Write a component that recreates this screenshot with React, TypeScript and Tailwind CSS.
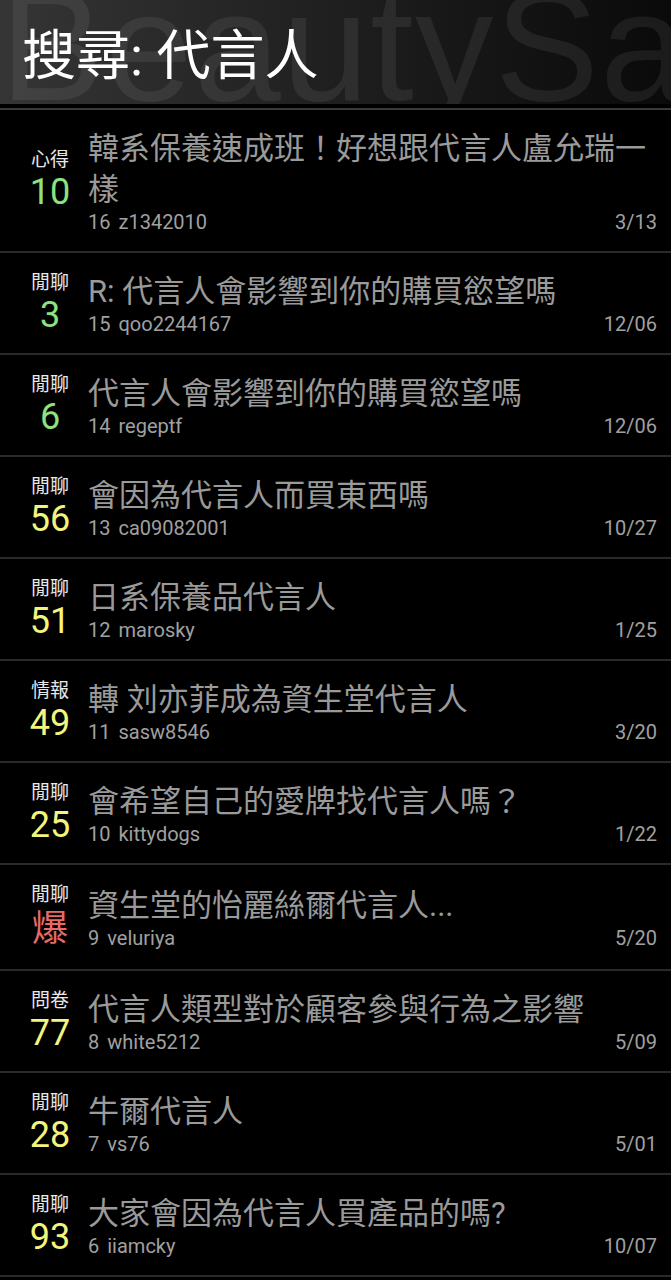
import React from "react";

type Row = {
  cat: string;
  num: string;
  tone: "green" | "yellow" | "red";
  title: string;
  idx: number;
  user: string;
  date: string;
};

const rows: Row[] = [
  { cat: "心得", num: "10", tone: "green", title: "韓系保養速成班！好想跟代言人盧允瑞一樣", idx: 16, user: "z1342010", date: "3/13" },
  { cat: "閒聊", num: "3", tone: "green", title: "R: 代言人會影響到你的購買慾望嗎", idx: 15, user: "qoo2244167", date: "12/06" },
  { cat: "閒聊", num: "6", tone: "green", title: "代言人會影響到你的購買慾望嗎", idx: 14, user: "regeptf", date: "12/06" },
  { cat: "閒聊", num: "56", tone: "yellow", title: "會因為代言人而買東西嗎", idx: 13, user: "ca09082001", date: "10/27" },
  { cat: "閒聊", num: "51", tone: "yellow", title: "日系保養品代言人", idx: 12, user: "marosky", date: "1/25" },
  { cat: "情報", num: "49", tone: "yellow", title: "轉 刘亦菲成為資生堂代言人", idx: 11, user: "sasw8546", date: "3/20" },
  { cat: "閒聊", num: "25", tone: "yellow", title: "會希望自己的愛牌找代言人嗎？", idx: 10, user: "kittydogs", date: "1/22" },
  { cat: "閒聊", num: "爆", tone: "red", title: "資生堂的怡麗絲爾代言人...", idx: 9, user: "veluriya", date: "5/20" },
  { cat: "問卷", num: "77", tone: "yellow", title: "代言人類型對於顧客參與行為之影響", idx: 8, user: "white5212", date: "5/09" },
  { cat: "閒聊", num: "28", tone: "yellow", title: "牛爾代言人", idx: 7, user: "vs76", date: "5/01" },
  { cat: "閒聊", num: "93", tone: "yellow", title: "大家會因為代言人買產品的嗎?", idx: 6, user: "iiamcky", date: "10/07" },
];

const toneClass: Record<Row["tone"], string> = {
  green: "text-[#8ee27e] leading-[41px]",
  yellow: "text-[#f4f47c] leading-[41px]",
  red: "text-[#e86a66] leading-[45px]",
};

const FONT = "font-['Roboto','Noto_Sans_CJK_TC',sans-serif]";

function PostRow({ r }: { r: Row }) {
  return (
    <div className="flex items-center border-b-2 border-[#2a2a2a] pl-[12px] pr-[14px] py-[17.5px]">
      <div className="flex w-[76px] shrink-0 flex-col items-center">
        <div className="text-[19px] leading-[24px] text-[#e8e8e8]">{r.cat}</div>
        <div className={`text-[36px] ${toneClass[r.tone]}`}>{r.num}</div>
      </div>
      <div className="flex min-w-0 flex-1 flex-col">
        <div className="mr-[-4px] text-[31px] leading-[41px] text-[#9a9a9a]">{r.title}</div>
        <div className="flex items-center justify-between text-[20px] leading-[24px] text-[#a0a0a0]">
          <div className="flex">
            <span>{r.idx}</span>
            <span className="ml-[8px]">{r.user}</span>
          </div>
          <span>{r.date}</span>
        </div>
      </div>
    </div>
  );
}

export default function App() {
  return (
    <div className={`min-h-[1280px] w-full bg-black ${FONT}`}>
      <div className="relative h-[104px] overflow-hidden bg-gradient-to-r from-[#353535] via-[#1f1f1f] to-[#0a0a0a]">
        <div className="pointer-events-none absolute left-0 top-[-32px] whitespace-nowrap font-['Liberation_Sans',sans-serif] text-[156px] leading-none tracking-[1.5px] text-white/[0.07]">
          BeautySa
        </div>
        <div className="relative flex h-full items-center pl-[22px] pt-[10px] text-[54px] leading-none text-white">
          搜尋: 代言人
        </div>
      </div>
      <div className="h-[4px] bg-black" />
      <div className="h-[2px] bg-[#3a3a3a]" />
      <div className="flex flex-col">
        {rows.map((r) => (
          <PostRow key={r.idx} r={r} />
        ))}
      </div>
    </div>
  );
}
